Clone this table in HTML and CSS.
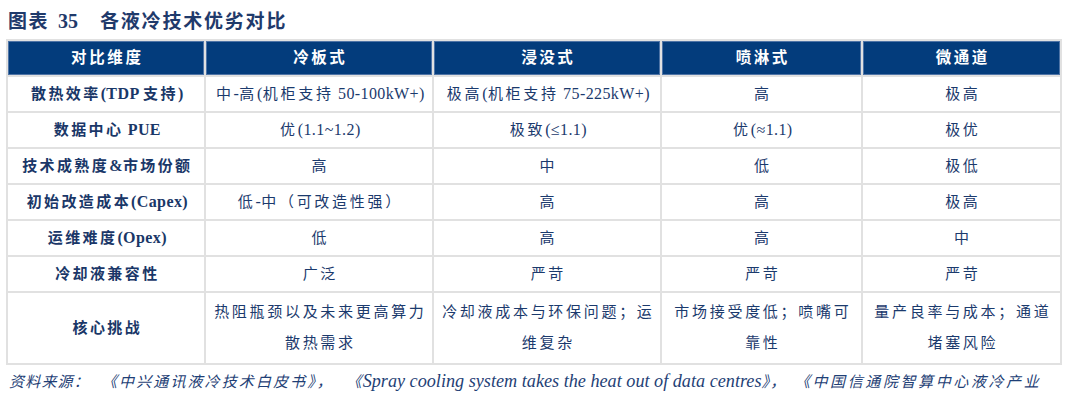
FILE: index.html
```html
<!DOCTYPE html>
<html lang="zh-CN">
<head>
<meta charset="utf-8">
<title>各液冷技术优劣对比</title>
<link rel="stylesheet" href="styles.css">
</head>
<body>
<div class="page">
  <h1 class="title"><span class="t-label">图表</span><span class="t-num">35</span><span class="t-text">各液冷技术优劣对比</span></h1>
  <div class="grid">
    <div class="hd">对比维度</div>
    <div class="hd">冷板式</div>
    <div class="hd">浸没式</div>
    <div class="hd">喷淋式</div>
    <div class="hd">微通道</div>

    <div class="c first">散热效率<span class="en">(TDP </span>支持<span class="en">)</span></div>
    <div class="c">中<span class="en">-</span>高<span class="en">(</span>机柜支持<span class="en"> 50-100kW+)</span></div>
    <div class="c">极高<span class="en">(</span>机柜支持<span class="en"> 75-225kW+)</span></div>
    <div class="c">高</div>
    <div class="c">极高</div>

    <div class="c first">数据中心<span class="en"> PUE</span></div>
    <div class="c">优<span class="en">(1.1~1.2)</span></div>
    <div class="c">极致<span class="en">(≤1.1)</span></div>
    <div class="c">优<span class="en">(≈1.1)</span></div>
    <div class="c">极优</div>

    <div class="c first">技术成熟度<span class="en">&amp;</span>市场份额</div>
    <div class="c">高</div>
    <div class="c">中</div>
    <div class="c">低</div>
    <div class="c">极低</div>

    <div class="c first">初始改造成本<span class="en">(Capex)</span></div>
    <div class="c">低<span class="en">-</span>中（可改造性强）</div>
    <div class="c">高</div>
    <div class="c">高</div>
    <div class="c">极高</div>

    <div class="c first">运维难度<span class="en">(Opex)</span></div>
    <div class="c">低</div>
    <div class="c">高</div>
    <div class="c">高</div>
    <div class="c">中</div>

    <div class="c first">冷却液兼容性</div>
    <div class="c">广泛</div>
    <div class="c">严苛</div>
    <div class="c">严苛</div>
    <div class="c">严苛</div>

    <div class="c first tall single">核心挑战</div>
    <div class="c tall">热阻瓶颈以及未来更高算力<br>散热需求</div>
    <div class="c tall">冷却液成本与环保问题；运<br>维复杂</div>
    <div class="c tall">市场接受度低；喷嘴可<br>靠性</div>
    <div class="c tall">量产良率与成本；通道<br>堵塞风险</div>
  </div>
  <p class="source">资料来源：<span class="gap1">《中兴通讯液冷技术白皮书》，</span><span class="gap2">《<span class="en">Spray cooling system takes the heat out of data centres</span>》，</span><span class="gap3">《中国信通院智算中心液冷产业</span></p>
</div>
</body>
</html>
```

FILE: styles.css
```css
html, body {
  margin: 0;
  padding: 0;
  background: #ffffff;
}

.page {
  width: 1068px;
  height: 406px;
  overflow: hidden;
  padding: 0 6px;
  box-sizing: border-box;
  font-family: "Liberation Serif", "Noto Sans CJK SC", serif;
  color: #1b3a6d;
}

.title {
  margin: 9px 0 5px 2px;
  height: 25px;
  line-height: 25px;
  font-size: 19px;
  font-weight: bold;
  color: #1f3a6b;
  display: flex;
  align-items: center;
  white-space: nowrap;
}

.t-label {
  letter-spacing: 1.5px;
}

.t-num {
  margin-left: 9px;
  font-size: 20px;
}

.t-text {
  margin-left: 22px;
  letter-spacing: 1.8px;
}

.grid {
  display: grid;
  grid-template-columns: 196px 226px 226px 199px 197px;
  grid-template-rows: 34px 34px 34px 34px 34px 34px 34px 70px;
  gap: 2px;
  padding: 2px;
  background: #e1e1e1;
  width: 1056px;
  box-sizing: border-box;
}

.hd {
  background: #033c7c;
  box-shadow: inset 0 0 0 1px #4f74a6;
  color: #ffffff;
  font-weight: bold;
  font-size: 15.5px;
  line-height: 34px;
  letter-spacing: 2.6px;
  padding-left: 2.6px;
  text-align: center;
  white-space: nowrap;
}

.c {
  background: #ffffff;
  font-size: 15px;
  line-height: 34px;
  letter-spacing: 2.7px;
  padding-left: 2.7px;
  text-align: center;
  white-space: nowrap;
  color: #1b3a6d;
}

.c.first {
  font-weight: bold;
  letter-spacing: 2.4px;
  color: #1a3768;
}

.c.tall {
  line-height: 31px;
  padding-top: 4px;
}

.c.tall.single {
  line-height: 70px;
  padding-top: 0;
}

.en {
  font-size: 16px;
  letter-spacing: 0.4px;
}

.source {
  margin: 5px 0 0 3px;
  font-size: 15px;
  line-height: 22px;
  font-style: italic;
  letter-spacing: 1.2px;
  color: #1f3f76;
  white-space: nowrap;
}

.source .gap1 {
  margin-left: 12px;
  letter-spacing: 2.1px;
}

.source .gap2 {
  margin-left: 20px;
  letter-spacing: 1.2px;
}

.source .gap3 {
  margin-left: 16px;
  letter-spacing: 2.6px;
}

.source .en {
  font-size: 18.2px;
  letter-spacing: 0;
}
```
